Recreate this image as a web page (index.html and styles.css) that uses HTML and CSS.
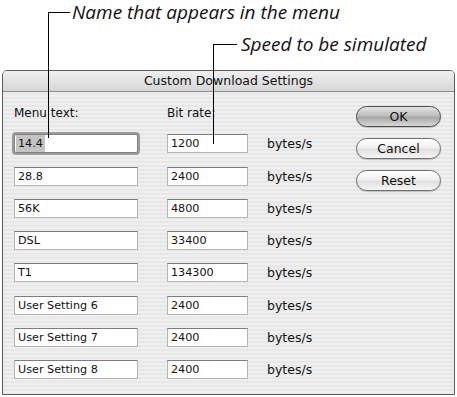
FILE: index.html
```html
<!DOCTYPE html>
<html lang="en">
<head>
    <meta charset="UTF-8">
    <title>Custom Download Settings</title>
    <link rel="stylesheet" href="styles.css">
</head>
<body>
<div class="page">
    <!-- Подписи-выноски -->
    <div class="callout callout-name">Name that appears in the menu</div>
    <div class="callout callout-speed">Speed to be simulated</div>
    <div class="leader leader-name"></div>
    <div class="leader leader-speed"></div>

    <!-- Окно диалога -->
    <div class="dialog">
        <div class="titlebar">Custom Download Settings</div>
        <div class="dialog-body">
            <div class="fields">
                <div class="label">Menu text:</div>
                <div class="label">Bit rate:</div>
                <div></div>

                <div class="field field-name focused"><span class="selected">14.4</span></div>
                <div class="field field-rate">1200</div>
                <div class="unit">bytes/s</div>

                <div class="field field-name">28.8</div>
                <div class="field field-rate">2400</div>
                <div class="unit">bytes/s</div>

                <div class="field field-name">56K</div>
                <div class="field field-rate">4800</div>
                <div class="unit">bytes/s</div>

                <div class="field field-name">DSL</div>
                <div class="field field-rate">33400</div>
                <div class="unit">bytes/s</div>

                <div class="field field-name">T1</div>
                <div class="field field-rate">134300</div>
                <div class="unit">bytes/s</div>

                <div class="field field-name">User Setting 6</div>
                <div class="field field-rate">2400</div>
                <div class="unit">bytes/s</div>

                <div class="field field-name">User Setting 7</div>
                <div class="field field-rate">2400</div>
                <div class="unit">bytes/s</div>

                <div class="field field-name">User Setting 8</div>
                <div class="field field-rate">2400</div>
                <div class="unit">bytes/s</div>
            </div>
            <div class="buttons">
                <button class="btn default">OK</button>
                <button class="btn">Cancel</button>
                <button class="btn">Reset</button>
            </div>
        </div>
    </div>
</div>
</body>
</html>
```

FILE: styles.css
```css
/* Общие стили */
body {
    margin: 0;
    background: #ffffff;
    font-family: "DejaVu Sans", sans-serif;
    color: #111;
}

.page {
    position: relative;
    width: 457px;
    height: 397px;
}

/* Выноски */
.callout {
    font-family: "Open Sans", sans-serif;
    font-style: italic;
    font-size: 19px;
    line-height: 24px;
    color: #111;
    white-space: nowrap;
}

.callout-name {
    padding-left: 72px;
}

.callout-speed {
    margin-top: 8px;
    padding-left: 241px;
}

.leader {
    position: absolute;
    border-top: 1px solid #000;
    border-left: 1px solid #000;
}

.leader-name {
    left: 48px;
    top: 12px;
    width: 21px;
    height: 125px;
}

.leader-speed {
    left: 213px;
    top: 44px;
    width: 23px;
    height: 99px;
}

/* Окно */
.dialog {
    margin: 14px 0 0 2px;
    width: 451px;
    height: 323px;
    border: 1px solid #5c5c5c;
    border-radius: 5px 5px 0 0;
    background: repeating-linear-gradient(#efefef 0 2px, #e7e7e7 2px 4px);
    display: flex;
    flex-direction: column;
}

.titlebar {
    height: 20px;
    line-height: 20px;
    text-align: center;
    font-size: 12.5px;
    color: #111;
    background: linear-gradient(#efefef, #d6d6d6);
    border-bottom: 1px solid #8a8a8a;
    border-radius: 4px 4px 0 0;
}

.dialog-body {
    display: flex;
    padding: 14px 13px 0 11px;
}

/* Поля */
.fields {
    display: grid;
    grid-template-columns: 124px 81px auto;
    column-gap: 29px;
    row-gap: 13.3px;
    align-items: center;
}

.label {
    font-size: 12px;
    line-height: 15px;
    height: 15px;
}

.field {
    box-sizing: border-box;
    height: 19px;
    padding: 0 3px;
    font-size: 11.2px;
    line-height: 17px;
    background: #fff;
    border: 1px solid #b4b4b4;
    border-top-color: #7c7c7c;
    white-space: nowrap;
}

.field.focused {
    padding-left: 1px;
    border-color: #808080;
    border-radius: 2px;
    box-shadow: 0 0 0 2px #9c9c9c;
}

.selected {
    display: inline-block;
    padding: 0 2px;
    background: #c4c4c4;
}

.unit {
    margin-left: -10px;
    font-size: 12.5px;
}

/* Кнопки */
.buttons {
    margin-left: auto;
    display: flex;
    flex-direction: column;
    gap: 11px;
}

.btn {
    width: 85px;
    height: 21px;
    padding: 0;
    font-family: "DejaVu Sans", sans-serif;
    font-size: 12.5px;
    color: #111;
    border: 1px solid #6e6e6e;
    border-radius: 11px;
    background: linear-gradient(#ffffff 0%, #f0f0f0 45%, #e0e0e0 55%, #f6f6f6 100%);
    box-shadow: 0 1px 1px rgba(0, 0, 0, 0.2);
}

.btn.default {
    border-color: #4a4a4a;
    background: linear-gradient(#e4e4e4 0%, #bdbdbd 45%, #a8a8a8 55%, #d8d8d8 100%);
}
```
